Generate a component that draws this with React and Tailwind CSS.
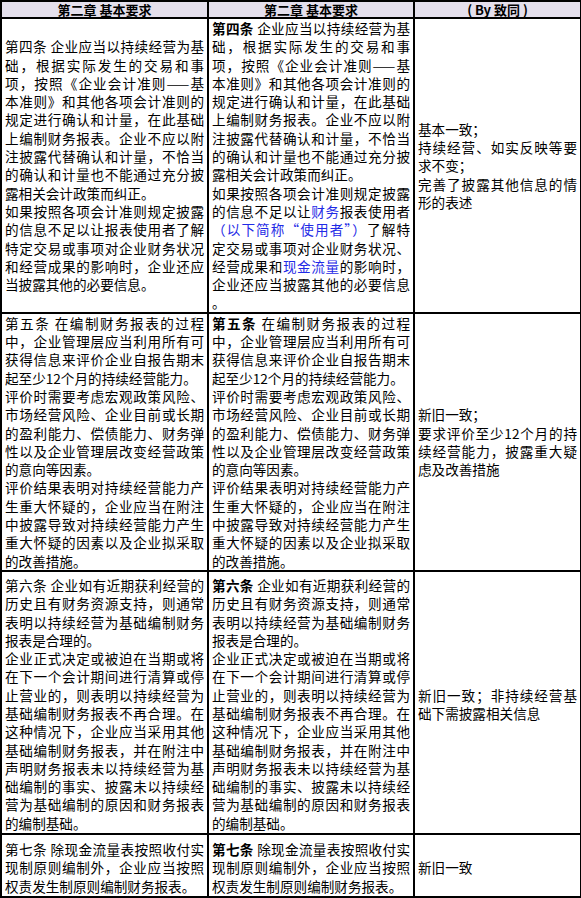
import React from "react";

const B = ({ children }) => <span className="text-[#1f2be6]">{children}</span>;
const S = ({ children }) => <span className="font-bold">{children}</span>;

function Lines({ lines }) {
  return (
    <div>
      {lines.map((l, i) => {
        const justify = l[1];
        return (
          <div
            key={i}
            className={
              justify
                ? "text-justify [text-align-last:justify]"
                : "text-left"
            }
          >
            {l[0]}
          </div>
        );
      })}
    </div>
  );
}

const r1c1 = [
  ["第四条 企业应当以持续经营为基", 1],
  ["础，根据实际发生的交易和事", 1],
  ["项，按照《企业会计准则——基", 1],
  ["本准则》和其他各项会计准则的", 1],
  ["规定进行确认和计量，在此基础", 1],
  ["上编制财务报表。企业不应以附", 1],
  ["注披露代替确认和计量，不恰当", 1],
  ["的确认和计量也不能通过充分披", 1],
  ["露相关会计政策而纠正。", 0],
  ["如果按照各项会计准则规定披露", 1],
  ["的信息不足以让报表使用者了解", 1],
  ["特定交易或事项对企业财务状况", 1],
  ["和经营成果的影响时，企业还应", 1],
  ["当披露其他的必要信息。", 0],
];

const r1c2 = [
  [<><S>第四条</S> 企业应当以持续经营为基</>, 1],
  ["础，根据实际发生的交易和事", 1],
  ["项，按照《企业会计准则——基", 1],
  ["本准则》和其他各项会计准则的", 1],
  ["规定进行确认和计量，在此基础", 1],
  ["上编制财务报表。企业不应以附", 1],
  ["注披露代替确认和计量，不恰当", 1],
  ["的确认和计量也不能通过充分披", 1],
  ["露相关会计政策而纠正。", 0],
  ["如果按照各项会计准则规定披露", 1],
  [<>的信息不足以让<B>财务</B>报表使用者</>, 1],
  [<><B>（以下简称“使用者”）</B>了解特</>, 1],
  ["定交易或事项对企业财务状况、", 1],
  [<>经营成果和<B>现金流量</B>的影响时，</>, 1],
  ["企业还应当披露其他的必要信息", 1],
  ["。", 0],
];

const r1c3 = [
  ["基本一致；", 0],
  ["持续经营、如实反映等要", 1],
  ["求不变；", 0],
  ["完善了披露其他信息的情", 1],
  ["形的表述", 0],
];

const r2body = [
  ["中，企业管理层应当利用所有可", 1],
  ["获得信息来评价企业自报告期末", 1],
  ["起至少12个月的持续经营能力。", 0],
  ["评价时需要考虑宏观政策风险、", 1],
  ["市场经营风险、企业目前或长期", 1],
  ["的盈利能力、偿债能力、财务弹", 1],
  ["性以及企业管理层改变经营政策", 1],
  ["的意向等因素。", 0],
  ["评价结果表明对持续经营能力产", 1],
  ["生重大怀疑的，企业应当在附注", 1],
  ["中披露导致对持续经营能力产生", 1],
  ["重大怀疑的因素以及企业拟采取", 1],
  ["的改善措施。", 0],
];
const r2c1 = [["第五条 在编制财务报表的过程", 1], ...r2body];
const r2c2 = [[<><S>第五条</S> 在编制财务报表的过程</>, 1], ...r2body];
const r2c3 = [
  ["新旧一致；", 0],
  ["要求评价至少12个月的持", 1],
  ["续经营能力，披露重大疑", 1],
  ["虑及改善措施", 0],
];

const r3body = [
  ["历史且有财务资源支持，则通常", 1],
  ["表明以持续经营为基础编制财务", 1],
  ["报表是合理的。", 0],
  ["企业正式决定或被迫在当期或将", 1],
  ["在下一个会计期间进行清算或停", 1],
  ["止营业的，则表明以持续经营为", 1],
  ["基础编制财务报表不再合理。在", 1],
  ["这种情况下，企业应当采用其他", 1],
  ["基础编制财务报表，并在附注中", 1],
  ["声明财务报表未以持续经营为基", 1],
  ["础编制的事实、披露未以持续经", 1],
  ["营为基础编制的原因和财务报表", 1],
  ["的编制基础。", 0],
];
const r3c1 = [["第六条 企业如有近期获利经营的", 1], ...r3body];
const r3c2 = [[<><S>第六条</S> 企业如有近期获利经营的</>, 1], ...r3body];
const r3c3 = [
  ["新旧一致；非持续经营基", 1],
  ["础下需披露相关信息", 0],
];

const r4body = [
  ["现制原则编制外，企业应当按照", 1],
  ["权责发生制原则编制财务报表。", 0],
];
const r4c1 = [["第七条 除现金流量表按照收付实", 1], ...r4body];
const r4c2 = [[<><S>第七条</S> 除现金流量表按照收付实</>, 1], ...r4body];
const r4c3 = [["新旧一致", 0]];

const td = "border-2 border-black align-middle px-[3px]";
const th = "border-2 border-black h-[17px] p-0 text-center font-bold text-[13px] leading-[15px]";

export default function App() {
  return (
    <div className="bg-white w-[581px] h-[898px] text-black font-['Noto_Sans_CJK_SC','Noto_Sans',sans-serif] text-[13.6px] leading-[18.3px]">
      <table className="border-collapse table-fixed w-[580px]">
        <colgroup>
          <col className="w-[207px]" />
          <col className="w-[206px]" />
          <col className="w-[167px]" />
        </colgroup>
        <thead>
          <tr className="bg-[#e4dfec]">
            <th className={th}>第二章 基本要求</th>
            <th className={th}>第二章 基本要求</th>
            <th className={th}>( By 致同 )</th>
          </tr>
        </thead>
        <tbody>
          <tr>
            <td className={`${td} py-0`}><Lines lines={r1c1} /></td>
            <td className={`${td} py-0`}><Lines lines={r1c2} /></td>
            <td className={`${td} py-0`}><Lines lines={r1c3} /></td>
          </tr>
          <tr>
            <td className={`${td} py-0`}><Lines lines={r2c1} /></td>
            <td className={`${td} py-0`}><Lines lines={r2c2} /></td>
            <td className={`${td} py-0`}><Lines lines={r2c3} /></td>
          </tr>
          <tr>
            <td className={`${td} pt-[4px] pb-[1px]`}><Lines lines={r3c1} /></td>
            <td className={`${td} pt-[4px] pb-[1px]`}><Lines lines={r3c2} /></td>
            <td className={`${td} pt-[4px] pb-[1px]`}><Lines lines={r3c3} /></td>
          </tr>
          <tr>
            <td className={`${td} pt-[5px] pb-[1px]`}><Lines lines={r4c1} /></td>
            <td className={`${td} pt-[5px] pb-[1px]`}><Lines lines={r4c2} /></td>
            <td className={`${td} pt-[5px] pb-[1px]`}><Lines lines={r4c3} /></td>
          </tr>
        </tbody>
      </table>
    </div>
  );
}
